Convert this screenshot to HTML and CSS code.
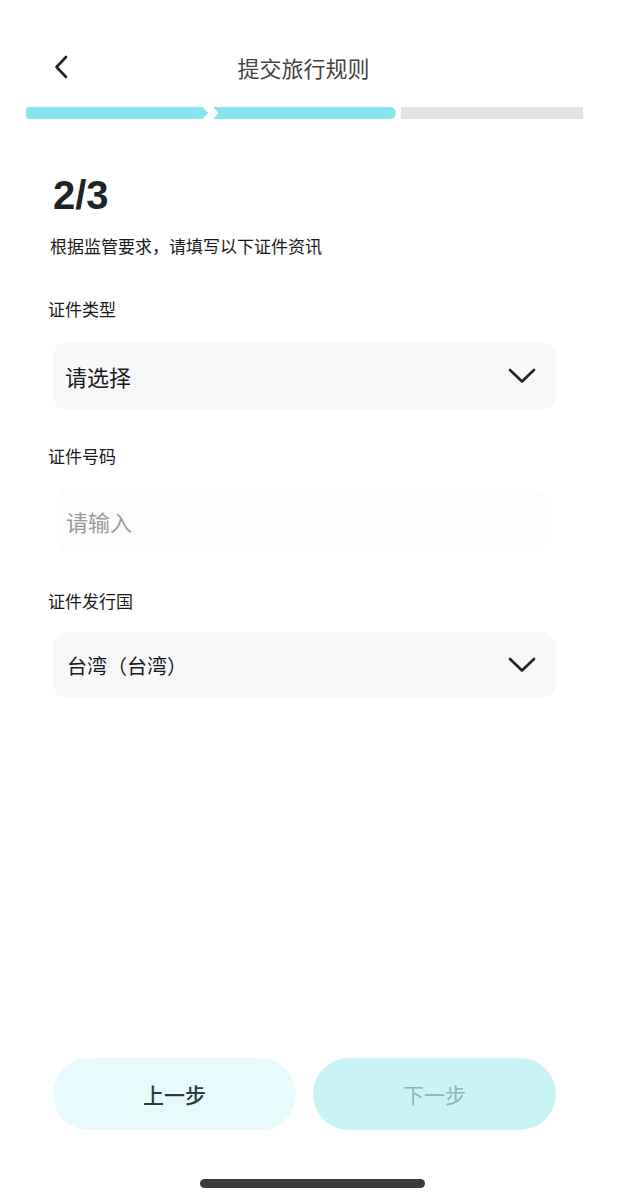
FILE: index.html
```html
<!DOCTYPE html>
<html lang="zh-CN">
<head>
<meta charset="utf-8">
<meta name="viewport" content="width=625">
<title>提交旅行规则</title>
<link rel="stylesheet" href="styles.css">
</head>
<body>
<div class="page">
  <header class="header">
    <span class="back">
      <svg width="14" height="24" viewBox="0 0 14 24"><path d="M12 2 L2.5 12 L12 22" fill="none" stroke="#222" stroke-width="2.6" stroke-linecap="round" stroke-linejoin="round"/></svg>
    </span>
    <h1 class="title">提交旅行规则</h1>
  </header>

  <div class="progress">
    <span class="seg seg-first"></span>
    <span class="seg seg-mid"></span>
    <span class="seg seg-last"></span>
  </div>

  <main class="content">
    <div class="step">2/3</div>
    <p class="subtitle">根据监管要求，请填写以下证件资讯</p>

    <div class="field field-type">
      <div class="label">证件类型</div>
      <div class="box select">
        <span class="value">请选择</span>
        <svg class="chev" width="28" height="16" viewBox="0 0 28 16"><path d="M2 2 L14 13.5 L26 2" fill="none" stroke="#222" stroke-width="2.6" stroke-linecap="round" stroke-linejoin="round"/></svg>
      </div>
    </div>

    <div class="field field-number">
      <div class="label">证件号码</div>
      <div class="box input">
        <span class="placeholder">请输入</span>
      </div>
    </div>

    <div class="field field-country">
      <div class="label">证件发行国</div>
      <div class="box select select-country">
        <span class="value value-sm">台湾（台湾）</span>
        <svg class="chev" width="28" height="16" viewBox="0 0 28 16"><path d="M2 2 L14 13.5 L26 2" fill="none" stroke="#222" stroke-width="2.6" stroke-linecap="round" stroke-linejoin="round"/></svg>
      </div>
    </div>
  </main>

  <footer class="footer">
    <div class="buttons">
      <button class="btn btn-prev">上一步</button>
      <button class="btn btn-next">下一步</button>
    </div>
    <div class="home-indicator"></div>
  </footer>
</div>
</body>
</html>
```

FILE: styles.css
```css
* { box-sizing: border-box; }

html, body {
  margin: 0;
  padding: 0;
  background: #ffffff;
}

body {
  font-family: "Noto Sans CJK SC", "Noto Sans", sans-serif;
  color: #222;
}

.page {
  width: 625px;
  height: 1200px;
  display: flex;
  flex-direction: column;
}

.header {
  display: flex;
  align-items: center;
  height: 40px;
  margin-top: 47px;
  padding-left: 54px;
  padding-right: 86px;
}

.back {
  width: 14px;
  height: 24px;
  display: flex;
}

.title {
  flex: 1;
  margin: 0;
  text-align: center;
  font-size: 22px;
  font-weight: 400;
  color: #444;
  line-height: 40px;
}

.progress {
  display: flex;
  gap: 5px;
  margin: 20px 42px 0 26px;
  height: 12px;
}

.seg {
  flex: 1;
  height: 12px;
}

.seg-first {
  background: #86e6f0;
  border-radius: 3px 0 0 3px;
  clip-path: polygon(0 0, calc(100% - 6px) 0, 100% 50%, calc(100% - 6px) 100%, 0 100%);
}

.seg-mid {
  background: #86e6f0;
  border-radius: 0 6px 6px 0;
  clip-path: polygon(0 0, 100% 0, 100% 100%, 0 100%, 5px 50%);
}

.seg-last {
  background: #e3e3e3;
}

.content {
  padding: 0 69px 0 48px;
}

.step {
  margin-top: 52px;
  margin-left: 5px;
  font-family: "Liberation Sans", "Noto Sans", sans-serif;
  font-size: 40px;
  font-weight: 700;
  line-height: 48px;
  color: #1e2326;
}

.subtitle {
  margin: 15px 0 0 2px;
  font-size: 17px;
  line-height: 24px;
  color: #1a1a1a;
}

.field-type {
  margin-top: 39px;
}

.field-number {
  margin-top: 34px;
}

.field-country {
  margin-top: 37px;
}

.label {
  font-size: 17px;
  line-height: 24px;
  color: #1a1a1a;
}

.box {
  display: flex;
  align-items: center;
  margin-top: 21px;
  margin-left: 5px;
  border-radius: 14px;
}

.field-country .box {
  margin-top: 19px;
}

.select {
  height: 68px;
  background: #f7f8fa;
  padding: 0 20px 0 12px;
  justify-content: space-between;
}

.select-country {
  height: 66px;
  padding-left: 14px;
}

.input {
  height: 63px;
  margin-left: 9px;
  margin-right: 10px;
  background: #fcfcfc;
  border-radius: 10px;
  padding-left: 9px;
}

.value {
  font-size: 22px;
  color: #1a1a1a;
}

.value-sm {
  font-size: 20px;
}

.placeholder {
  font-size: 22px;
  color: #9a9a9a;
}

.chev {
  display: block;
}

.footer {
  margin-top: auto;
  display: flex;
  flex-direction: column;
  padding-bottom: 12px;
}

.buttons {
  display: flex;
  gap: 17px;
  width: 503px;
  margin-left: 53px;
}

.btn {
  flex: 1;
  height: 72px;
  border: none;
  border-radius: 36px;
  font-family: "Noto Sans CJK SC", "Noto Sans", sans-serif;
  font-size: 21px;
  font-weight: 500;
}

.btn-prev {
  background: #e7fbfd;
  color: #2b3b3c;
}

.btn-next {
  background: #caf3f6;
  color: #8fb3b7;
  font-weight: 400;
}

.home-indicator {
  margin-top: 49px;
  margin-left: 200px;
  width: 225px;
  height: 9px;
  border-radius: 5px;
  background: #3a3a3a;
}
```
